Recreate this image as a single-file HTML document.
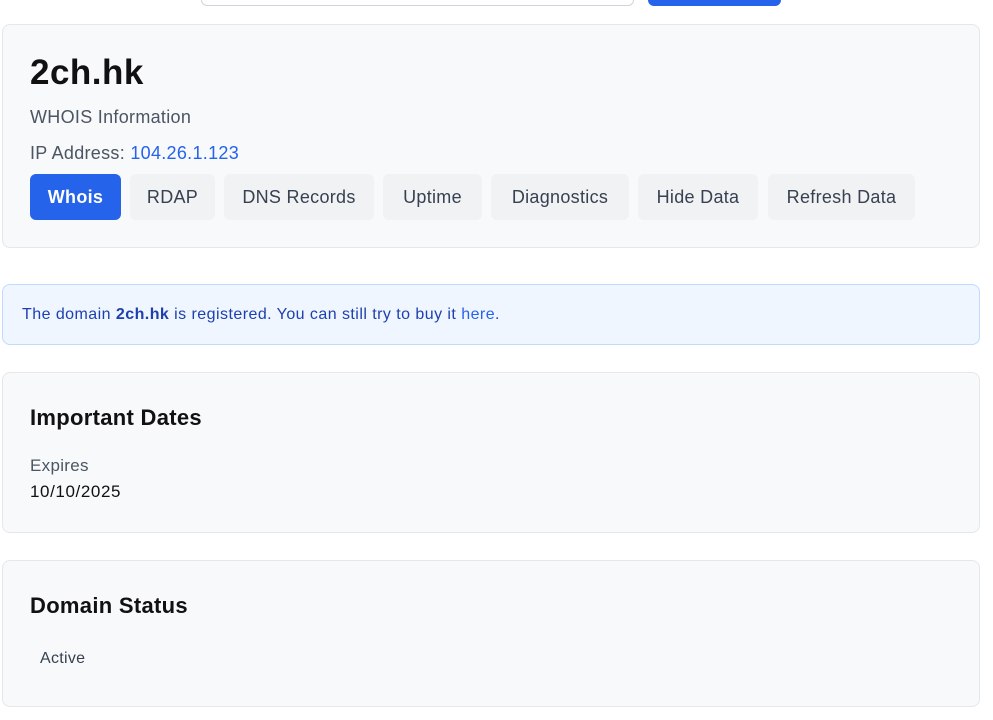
<!DOCTYPE html>
<html><head><style>
*{box-sizing:border-box;margin:0;padding:0}
body{width:993px;height:720px;background:#fff;font-family:"Liberation Sans",sans-serif;position:relative;overflow:hidden;color:#111;letter-spacing:0.3px}
.a{position:absolute}
.card{position:absolute;left:2px;width:978px;background:#f8f9fb;border:1px solid #e5e7eb;border-radius:8px}
.btn{position:absolute;top:174px;height:46px;border-radius:6px;background:#f1f2f4;color:#374151;font-size:18px;display:flex;align-items:center;justify-content:center}
</style></head><body>
<div class="a" style="left:201px;top:-10px;width:433px;height:16px;border:1px solid #d1d5db;border-radius:6px"></div>
<div class="a" style="left:648px;top:-10px;width:133px;height:16px;background:#2563eb;border-radius:6px"></div>
<div class="card" style="top:24px;height:224px"></div>
<div class="a" style="left:30px;top:53px;font-size:35px;font-weight:bold;color:#111;letter-spacing:0.5px">2ch.hk</div>
<div class="a" style="left:30px;top:107px;font-size:18px;color:#4b5563">WHOIS Information</div>
<div class="a" style="left:30px;top:143px;font-size:18px;color:#4b5563">IP Address: <span style="color:#2563eb">104.26.1.123</span></div>
<div class="btn" style="left:30px;width:91px;background:#2563eb;color:#fff;font-weight:bold">Whois</div>
<div class="btn" style="left:130px;width:85px">RDAP</div>
<div class="btn" style="left:224px;width:150px">DNS Records</div>
<div class="btn" style="left:383px;width:99px">Uptime</div>
<div class="btn" style="left:491px;width:138px">Diagnostics</div>
<div class="btn" style="left:638px;width:120px">Hide Data</div>
<div class="btn" style="left:768px;width:147px">Refresh Data</div>
<div class="a" style="left:2px;top:284px;width:978px;height:61px;background:#eff6ff;border:1px solid #bfdbfe;border-radius:8px"></div>
<div class="a" style="left:22px;top:306px;font-size:16px;color:#1e40af;letter-spacing:0.45px">The domain <b>2ch.hk</b> is registered. You can still try to buy it <span style="color:#2563eb">here</span>.</div>
<div class="card" style="top:372px;height:161px"></div>
<div class="a" style="left:30px;top:405px;font-size:22px;font-weight:bold">Important Dates</div>
<div class="a" style="left:30px;top:456px;font-size:17px;color:#4b5563">Expires</div>
<div class="a" style="left:30px;top:482px;font-size:17px;color:#111;letter-spacing:0.6px">10/10/2025</div>
<div class="card" style="top:560px;height:147px"></div>
<div class="a" style="left:30px;top:593px;font-size:22px;font-weight:bold">Domain Status</div>
<div class="a" style="left:40px;top:650px;font-size:16px;color:#374151">Active</div>
</body></html>
